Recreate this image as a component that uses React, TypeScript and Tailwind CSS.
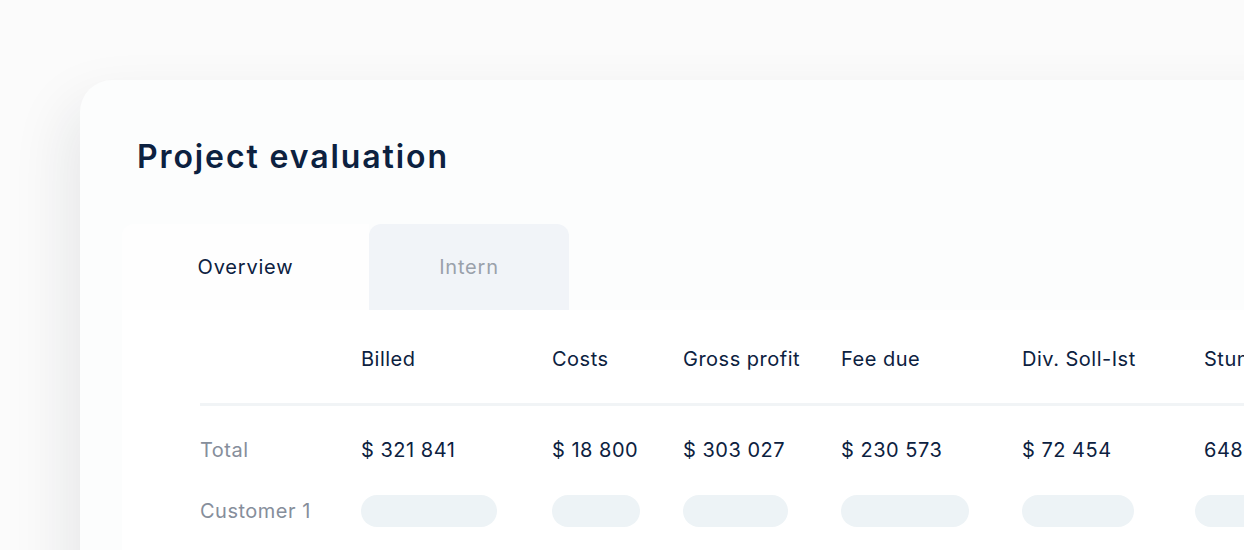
import React from "react";

const cols = [
  { h: "Billed", v: "$ 321 841", pill: "w-[136px]" },
  { h: "Costs", v: "$ 18 800", pill: "w-[88px]" },
  { h: "Gross profit", v: "$ 303 027", pill: "w-[105px]" },
  { h: "Fee due", v: "$ 230 573", pill: "w-[128px]" },
  { h: "Div. Soll-Ist", v: "$ 72 454", pill: "w-[112px]" },
  { h: "Stunden", v: "648 h", pill: "w-[120px] -ml-[9px]" },
];

export default function App() {
  return (
    <div
      className="h-[550px] w-full overflow-hidden bg-[#fbfbfb] pl-[80px] pt-[80px]"
      style={{ fontFamily: "Inter, 'Open Sans', sans-serif" }}
    >
      <div className="h-[560px] w-[1300px] rounded-tl-[32px] bg-[#fcfdfd] pl-[42px] pt-[57px] shadow-[-12px_24px_60px_rgba(20,30,45,0.09)]">
        <h1 className="ml-[15px] text-[32px] font-semibold leading-[40px] tracking-[1.9px] text-[#0c2140]">
          Project evaluation
        </h1>
        <div className="mt-[47px] flex">
          <div className="flex h-[86px] w-[247px] items-center justify-center rounded-tl-[12px] bg-[#fefefe] text-[20px] tracking-[0.8px] text-[#0c2140]">
            Overview
          </div>
          <div className="flex h-[86px] w-[200px] items-center justify-center rounded-t-[12px] bg-[#f1f4f8] text-[20px] tracking-[0.8px] text-[#9aa1ab]">
            Intern
          </div>
        </div>
        <div className="h-[300px] bg-white pl-[78px]">
          <div className="grid grid-cols-[161px_191px_131px_158px_181px_182px_200px] text-[20px] tracking-[0.5px] text-[#0c2140]">
            <div className="h-[96px] border-b-[3px] border-[#f1f4f6]" />
            {cols.map((c) => (
              <div key={c.h} className="h-[96px] whitespace-nowrap border-b-[3px] border-[#f1f4f6] pt-[35px] leading-[28px]">
                {c.h}
              </div>
            ))}

            <div className="pt-[30px] leading-[28px] text-[#868e9b]">Total</div>
            {cols.map((c) => (
              <div key={c.h} className="whitespace-nowrap pt-[30px] leading-[28px]">
                {c.v}
              </div>
            ))}

            <div className="whitespace-nowrap pt-[31px] leading-[32px] text-[#868e9b]">Customer 1</div>
            {cols.map((c) => (
              <div key={c.h} className="pt-[31px]">
                <div className={`h-[32px] rounded-full bg-[#edf3f6] ${c.pill}`} />
              </div>
            ))}
          </div>
        </div>
      </div>
    </div>
  );
}
